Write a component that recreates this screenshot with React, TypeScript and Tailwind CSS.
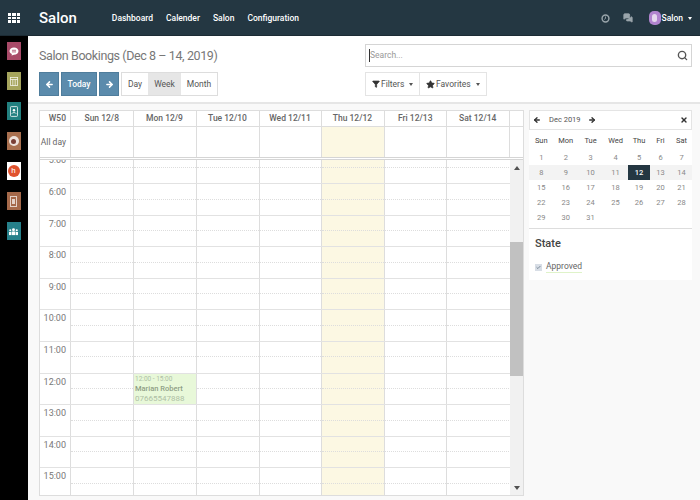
import { ArrowLeft, ArrowRight, Check, Filter, MessagesSquare, Search, Star, X } from 'lucide-react'

const days = ['Sun 12/8', 'Mon 12/9', 'Tue 12/10', 'Wed 12/11', 'Thu 12/12', 'Fri 12/13', 'Sat 12/14']
const hours = ['5:00', '6:00', '7:00', '8:00', '9:00', '10:00', '11:00', '12:00', '13:00', '14:00', '15:00']
const navItems = ['Dashboard', 'Calender', 'Salon', 'Configuration']
const miniDays = ['Sun', 'Mon', 'Tue', 'Wed', 'Thu', 'Fri', 'Sat']
const miniWeeks = [
  [1, 2, 3, 4, 5, 6, 7],
  [8, 9, 10, 11, 12, 13, 14],
  [15, 16, 17, 18, 19, 20, 21],
  [22, 23, 24, 25, 26, 27, 28],
  [29, 30, 31],
]

const gridCols = 'grid grid-cols-[30px_62.5px_63px_63px_62px_63px_62.5px_62.5px_1fr]'
const miniCols = 'grid grid-cols-[24.5px_24.5px_25px_25px_22px_21px_21px]'

function SideIcon({ bg, children }: { bg: string; children: React.ReactNode }) {
  return <div className={`w-[14px] h-[18px] flex items-center justify-center ${bg}`}>{children}</div>
}

function Caret({ color }: { color: string }) {
  return <div className={`w-0 h-0 border-x-[2.5px] border-x-transparent border-t-[3px] ${color}`} />
}

function Sidebar() {
  return (
    <div className="w-[28px] shrink-0 bg-black flex flex-col items-center pt-[6px] pr-[1px] gap-[12px]">
      <SideIcon bg="bg-[#a84a68]">
        <svg viewBox="0 0 12 11" className="w-[10px] h-[9px]">
          <path d="M6 0.5C9 0.5 11.5 2.3 11.5 5S9 9.5 6 9.5L3 10.5L3.4 8.6C1.6 7.8 0.5 6.5 0.5 5C0.5 2.3 3 0.5 6 0.5Z" fill="white" />
          <path d="M3.5 4H8.5M3.5 6H8.5" stroke="#a84a68" strokeWidth="1" />
        </svg>
      </SideIcon>
      <SideIcon bg="bg-[#a5a45c]">
        <svg viewBox="0 0 10 11" className="w-[8px] h-[9px]" fill="none" stroke="white" strokeOpacity="0.85">
          <rect x="0.5" y="0.5" width="9" height="10" />
          <path d="M0.5 3H9.5M3.5 3V10.5M6.5 3V10.5" />
        </svg>
      </SideIcon>
      <SideIcon bg="bg-[#22807f]">
        <svg viewBox="0 0 9 12" className="w-[8px] h-[11px]" fill="none" stroke="white" strokeOpacity="0.9">
          <rect x="0.5" y="0.5" width="8" height="11" rx="1" />
          <circle cx="4.5" cy="4.5" r="1.4" fill="white" stroke="none" />
          <path d="M2 8.5C2.5 6.8 6.5 6.8 7 8.5" />
        </svg>
      </SideIcon>
      <SideIcon bg="bg-[#a9704f]">
        <div className="w-[10px] h-[10px] rounded-full bg-white/80 flex items-center justify-center">
          <div className="w-[5px] h-[5px] rounded-full bg-[#7a3f35]" />
        </div>
      </SideIcon>
      <SideIcon bg="bg-white">
        <div className="w-[12px] h-[12px] rounded-full bg-[#e0532f] flex items-center justify-center text-[8px] leading-none text-white">h</div>
      </SideIcon>
      <SideIcon bg="bg-[#a5694a]">
        <div className="w-[7px] h-[11px] border border-white/70 flex items-center justify-center">
          <div className="w-[3px] h-[5px] bg-white/70" />
        </div>
      </SideIcon>
      <SideIcon bg="bg-[#26808a]">
        <svg viewBox="0 0 12 10" className="w-[11px] h-[9px]" fill="white">
          <circle cx="6" cy="3" r="1.6" />
          <circle cx="2.4" cy="3.6" r="1.2" />
          <circle cx="9.6" cy="3.6" r="1.2" />
          <rect x="4" y="5" width="4" height="4" />
          <rect x="1" y="5.5" width="2.5" height="3.5" />
          <rect x="8.5" y="5.5" width="2.5" height="3.5" />
        </svg>
      </SideIcon>
    </div>
  )
}

function TopBar() {
  return (
    <div className="h-[36px] shrink-0 bg-[#243742] flex items-center pt-[1px] text-white border-b border-[#1c2b34]">
      <div className="w-[12px] h-[10px] ml-[8px] grid grid-cols-3 gap-[1px]">
        {Array.from({ length: 9 }).map((_, i) => (
          <div key={i} className="bg-white" />
        ))}
      </div>
      <span className="ml-[19px] text-[15px] font-medium leading-none">Salon</span>
      <div className="ml-[35px] flex gap-[13px] text-[8.5px] font-medium">
        {navItems.map(item => (
          <span key={item}>{item}</span>
        ))}
      </div>
      <div className="ml-auto flex items-center text-[#9aa5ab]">
        <svg viewBox="0 0 10 10" className="w-[9px] h-[9px]" fill="none" stroke="#9aa5ab">
          <circle cx="5" cy="5" r="3.8" strokeWidth="1.6" />
          <path d="M5 2.8V5L3.6 6" strokeWidth="1" />
        </svg>
        <MessagesSquare className="w-[10px] h-[10px] ml-[13px]" fill="#9aa5ab" />
        <div className="w-[12px] h-[14px] ml-[16px] rounded-[5px] bg-[#b184cf] flex items-center justify-center">
          <div className="w-[5px] h-[8px] rounded-full bg-[#e6d8ef]" />
        </div>
        <span className="ml-[1px] text-[8.5px] font-medium text-white">Salon</span>
        <div className="ml-[5px] mr-[8px]">
          <Caret color="border-t-white" />
        </div>
      </div>
    </div>
  )
}

function ControlPanel() {
  return (
    <div className="h-[68px] shrink-0 bg-white border-b-2 border-[#e6e6e6] flex">
      <div className="w-[337px] pl-[11px] shrink-0">
        <div className="mt-[10px] text-[12.5px] tracking-[-0.4px] leading-[19px] text-[#777777]">Salon Bookings (Dec 8 – 14, 2019)</div>
        <div className="mt-[7px] flex text-[8.5px]">
          <button className="w-[20px] h-[24px] bg-[#5b8bac] text-white flex items-center justify-center border border-[#4f7d9c]">
            <ArrowLeft className="w-[9px] h-[9px]" strokeWidth={4} />
          </button>
          <button className="ml-[2px] w-[36px] h-[24px] bg-[#5b8bac] text-white font-medium border border-[#4f7d9c]">Today</button>
          <button className="ml-[2px] w-[20px] h-[24px] bg-[#5b8bac] text-white flex items-center justify-center border border-[#4f7d9c]">
            <ArrowRight className="w-[9px] h-[9px]" strokeWidth={4} />
          </button>
          <div className="ml-[2px] flex h-[24px] border border-[#dddddd] text-[#555555]">
            <span className="w-[26px] flex items-center justify-center">Day</span>
            <span className="w-[33px] flex items-center justify-center bg-[#e6e6e6]">Week</span>
            <span className="w-[36px] flex items-center justify-center">Month</span>
          </div>
        </div>
      </div>
      <div className="pt-[8px] flex-1 pr-[8px]">
        <div className="h-[23px] border border-[#d5d5d5] flex items-center pl-[3px] pr-[3px]">
          <div className="w-[1px] h-[13px] bg-[#333333]" />
          <span className="text-[8.5px] text-[#999999]">Search...</span>
          <Search className="ml-auto w-[11px] h-[11px] text-[#555555]" strokeWidth={3} />
        </div>
        <div className="mt-[5px] flex h-[24px] w-[122px] border border-[#e4e4e4] text-[8.5px] text-[#555555]">
          <div className="w-[54px] flex items-center pl-[6px] border-r border-[#e4e4e4]">
            <Filter className="w-[8px] h-[8px] mr-[1px] text-[#333333]" fill="#333333" />
            Filters
            <div className="ml-[5px]">
              <Caret color="border-t-[#555555]" />
            </div>
          </div>
          <div className="flex items-center pl-[6px]">
            <Star className="w-[9px] h-[9px] mr-[1px] text-[#333333]" fill="#333333" />
            Favorites
            <div className="ml-[5px]">
              <Caret color="border-t-[#555555]" />
            </div>
          </div>
        </div>
      </div>
    </div>
  )
}

function Calendar() {
  return (
    <div className="w-[485px] h-[386px] shrink-0 bg-white border border-[#dddddd] flex flex-col overflow-hidden text-[#666666]">
      <div className={`${gridCols} h-[16px] shrink-0 border-b border-[#dddddd] text-[8.5px] font-medium leading-[15px] text-center`}>
        <div className="text-right pr-[4px]">W50</div>
        {days.map(d => (
          <div key={d} className="border-l border-[#dddddd]">{d}</div>
        ))}
        <div className="border-l border-[#dddddd]" />
      </div>
      <div className={`${gridCols} h-[33px] shrink-0 border-b-[3px] border-double border-[#d5d5d5] text-[8.5px]`}>
        <div className="text-right pr-[4px] leading-[30px] whitespace-nowrap">All day</div>
        {days.map((d, i) => (
          <div key={d} className={`border-l border-[#dddddd] ${i === 4 ? 'bg-[#fcf8e3]' : ''}`} />
        ))}
        <div className="border-l border-[#dddddd]" />
      </div>
      <div className="flex-1 flex min-h-0">
        <div className="flex-1 overflow-hidden">
          <div className="relative -mt-[7.6px]">
            {hours.map(h => (
              <div key={h} className={`${gridCols} h-[31.6px] border-b border-[#e2e2e2] text-[9px] text-[#777777]`}>
                <div className="text-right pr-[4px] leading-[17px]">{h}</div>
                {days.map((d, i) => (
                  <div key={d} className={`border-l border-[#dddddd] ${i === 4 ? 'bg-[#fcf8e3]' : ''}`}>
                    <div className="h-[15.5px] border-b border-dotted border-[#dddddd]" />
                  </div>
                ))}
              </div>
            ))}
            <div className="absolute left-[94px] top-[221.5px] w-[62px] h-[30px] bg-[#e8f8d9] text-[7.5px] leading-[10px] pl-[1px] text-[#aebfa5]">
              <div className="text-[6.5px]">12:00 - 15:00</div>
              <div className="font-medium text-[#8f9f86]">Marian Robert</div>
              <div className="text-[8px] text-[#aebfa5]">07665547888</div>
            </div>
          </div>
        </div>
        <div className="w-[13px] shrink-0 bg-[#f1f1f1] flex flex-col items-center">
          <div className="h-[15px] flex items-center">
            <div className="w-0 h-0 border-x-[3px] border-x-transparent border-b-[4px] border-b-[#505050]" />
          </div>
          <div className="mt-[67px] w-full h-[134px] bg-[#c1c1c1]" />
          <div className="mt-auto h-[15px] flex items-center">
            <div className="w-0 h-0 border-x-[3px] border-x-transparent border-t-[4px] border-t-[#505050]" />
          </div>
        </div>
      </div>
    </div>
  )
}

function MiniCalendar() {
  return (
    <div className="w-[163px] shrink-0 h-[170px] bg-white text-[#666666]">
      <div className="h-[20px] border border-[#e4e4e4] flex items-center text-[7.5px] text-[#555555] pl-[3px] pr-[3px]">
        <ArrowLeft className="w-[8px] h-[8px] text-[#333333]" strokeWidth={4} />
        <span className="ml-[8px]">Dec 2019</span>
        <ArrowRight className="w-[8px] h-[8px] ml-[7px] text-[#333333]" strokeWidth={4} />
        <X className="w-[8px] h-[8px] ml-auto text-[#333333]" strokeWidth={4} />
      </div>
      <div className={`${miniCols} text-center text-[7.5px] text-[#444444] mt-[3px] leading-[15px] h-[15px]`}>
        {miniDays.map(d => (
          <div key={d}>{d}</div>
        ))}
      </div>
      <div className="pt-[2px] text-[7.5px] text-[#888888] text-center">
        {miniWeeks.map((w, wi) => (
          <div key={wi} className={`${miniCols} h-[15px] leading-[15px]`}>
            {w.map(n => (
              <div key={n} className={n === 12 ? 'bg-[#243742] text-white font-medium' : wi === 1 ? 'bg-[#f3f3f3]' : ''}>{n}</div>
            ))}
          </div>
        ))}
      </div>
      <div className="mt-[3px] border-t border-[#dddddd] pl-[6px]">
        <div className="mt-[7px] text-[11px] font-medium text-[#444444] leading-[16px]">State</div>
        <div className="mt-[9px] flex items-center text-[8.5px] text-[#666666]">
          <div className="w-[7px] h-[7px] bg-[#d8dee6] mr-[4px] flex items-center justify-center">
            <Check className="w-[5px] h-[5px] text-[#667788]" strokeWidth={4} />
          </div>
          <span className="border-b border-[#dff3c9] leading-[11px]">Approved</span>
        </div>
      </div>
    </div>
  )
}

export default function App() {
  return (
    <div className="w-[700px] h-[500px] overflow-hidden flex flex-col font-['Roboto',sans-serif] bg-[#f9f9f9]">
      <TopBar />
      <div className="flex-1 flex min-h-0">
        <Sidebar />
        <div className="flex-1 flex flex-col min-w-0">
          <ControlPanel />
          <div className="flex-1 flex gap-[5px] pl-[11px] pt-[6px] min-h-0 items-start">
            <Calendar />
            <MiniCalendar />
          </div>
        </div>
      </div>
    </div>
  )
}
